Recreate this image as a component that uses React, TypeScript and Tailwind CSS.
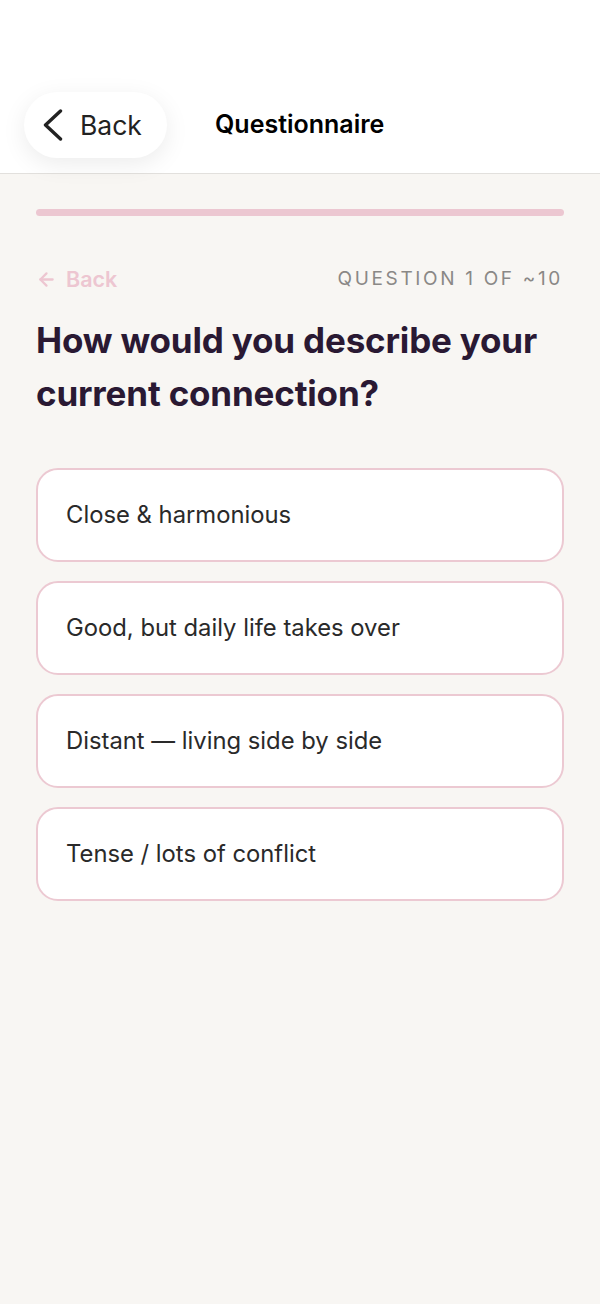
import { ArrowLeft } from 'lucide-react';

const options = [
  'Close & harmonious',
  'Good, but daily life takes over',
  'Distant — living side by side',
  'Tense / lots of conflict',
];

export default function App() {
  return (
    <div className="min-h-[1304px] bg-[#f8f6f3] font-['Inter',sans-serif]">
      {/* top nav */}
      <header className="h-[174px] bg-white border-b border-[#e2e0dd] flex items-end pb-[15px]">
        <div className="flex items-center">
          <button className="ml-[24px] h-[66px] w-[143px] rounded-full bg-white shadow-[0_6px_24px_rgba(0,0,0,0.08)] flex items-center pl-[19px] gap-[17px] text-[#222]">
            <svg width="20" height="32" viewBox="0 0 20 32" fill="none" stroke="currentColor" strokeWidth="3.4" strokeLinecap="round" strokeLinejoin="round">
              <polyline points="17.5,2 2.5,16 17.5,30" />
            </svg>
            <span className="text-[26.5px] leading-none">Back</span>
          </button>
          <h1 className="ml-[48px] text-[25px] font-semibold text-black">Questionnaire</h1>
        </div>
      </header>

      <main className="px-[36px] pt-[35px]">
        <div className="h-[7px] w-full rounded-full bg-[#ecc7d1]" />

        <div className="mt-[47px] flex items-center justify-between">
          <span className="flex items-center gap-[9px] text-[21.5px] font-semibold text-[#edc6d1]">
            <ArrowLeft className="h-[21px] w-[21px]" strokeWidth={2.6} />
            Back
          </span>
          <span className="text-[19px] tracking-[0.14em] text-[#8a8886] mr-[1px]">QUESTION 1 OF ~10</span>
        </div>

        <h2 className="mt-[19px] text-[35px] leading-[53px] font-bold tracking-[-0.005em] text-[#2a1933]">
          How would you describe your current connection?
        </h2>

        <div className="mt-[48px] flex flex-col gap-[19px]">
          {options.map((o) => (
            <button
              key={o}
              className="h-[94px] w-full rounded-[22px] border-2 border-[#ecc9d2] bg-white pl-[28px] text-left text-[23.8px] text-[#2a2a2a]"
            >
              {o}
            </button>
          ))}
        </div>
      </main>
    </div>
  );
}
